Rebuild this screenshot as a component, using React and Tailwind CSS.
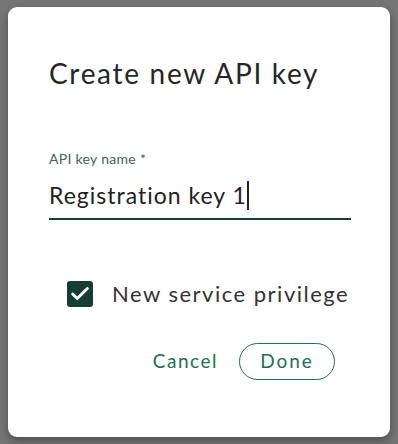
import { Check } from 'lucide-react';

const App = () => {
  return (
    <div className="w-[398px] h-[444px] bg-[#767676] pt-[7px] pl-[8px] font-['Lato',sans-serif]">
      <div className="w-[382px] h-[430px] bg-white rounded-[9px] shadow-[0_4px_10px_rgba(0,0,0,0.35)] pl-[41px] pr-[40px] pt-[46px]">
        {/* Titulo */}
        <h1 className="text-[28px] leading-[40px] text-[#262626] tracking-[1.7px]">
          Create new API key
        </h1>

        {/* Campo */}
        <div className="mt-[57px] w-[302px]">
          <label className="block text-[14px] leading-[18px] text-[#3d6656] tracking-[0.3px]">
            API key name *
          </label>
          <div className="flex items-center h-[36px] mt-[9px]">
            <span className="text-[23px] leading-[30px] text-[#222] tracking-[1px]">Registration key 1</span>
            <span className="w-[2px] h-[29px] bg-[#222]"></span>
          </div>
          <div className="h-[2px] bg-[#173f34] mt-[5px]"></div>
        </div>

        {/* Checkbox */}
        <div className="flex items-center gap-[19px] mt-[60px] ml-[18px]">
          <div className="w-[26px] h-[26px] rounded-[3px] bg-[#153d33] flex items-center justify-center">
            <Check className="w-[22px] h-[22px] text-white" strokeWidth={3.2} />
          </div>
          <span className="text-[22px] leading-[28px] text-[#333] tracking-[1.5px]">New service privilege</span>
        </div>

        {/* Botoes */}
        <div className="flex items-center justify-end gap-[21px] mt-[35px] pr-[15px]">
          <button className="text-[19px] text-[#1f6e55] tracking-[1.5px]">Cancel</button>
          <button className="w-[96px] h-[37px] rounded-full border border-[#1f6e55] text-[19px] text-[#1f6e55] tracking-[2px]">
            Done
          </button>
        </div>
      </div>
    </div>
  );
};

export default App;
